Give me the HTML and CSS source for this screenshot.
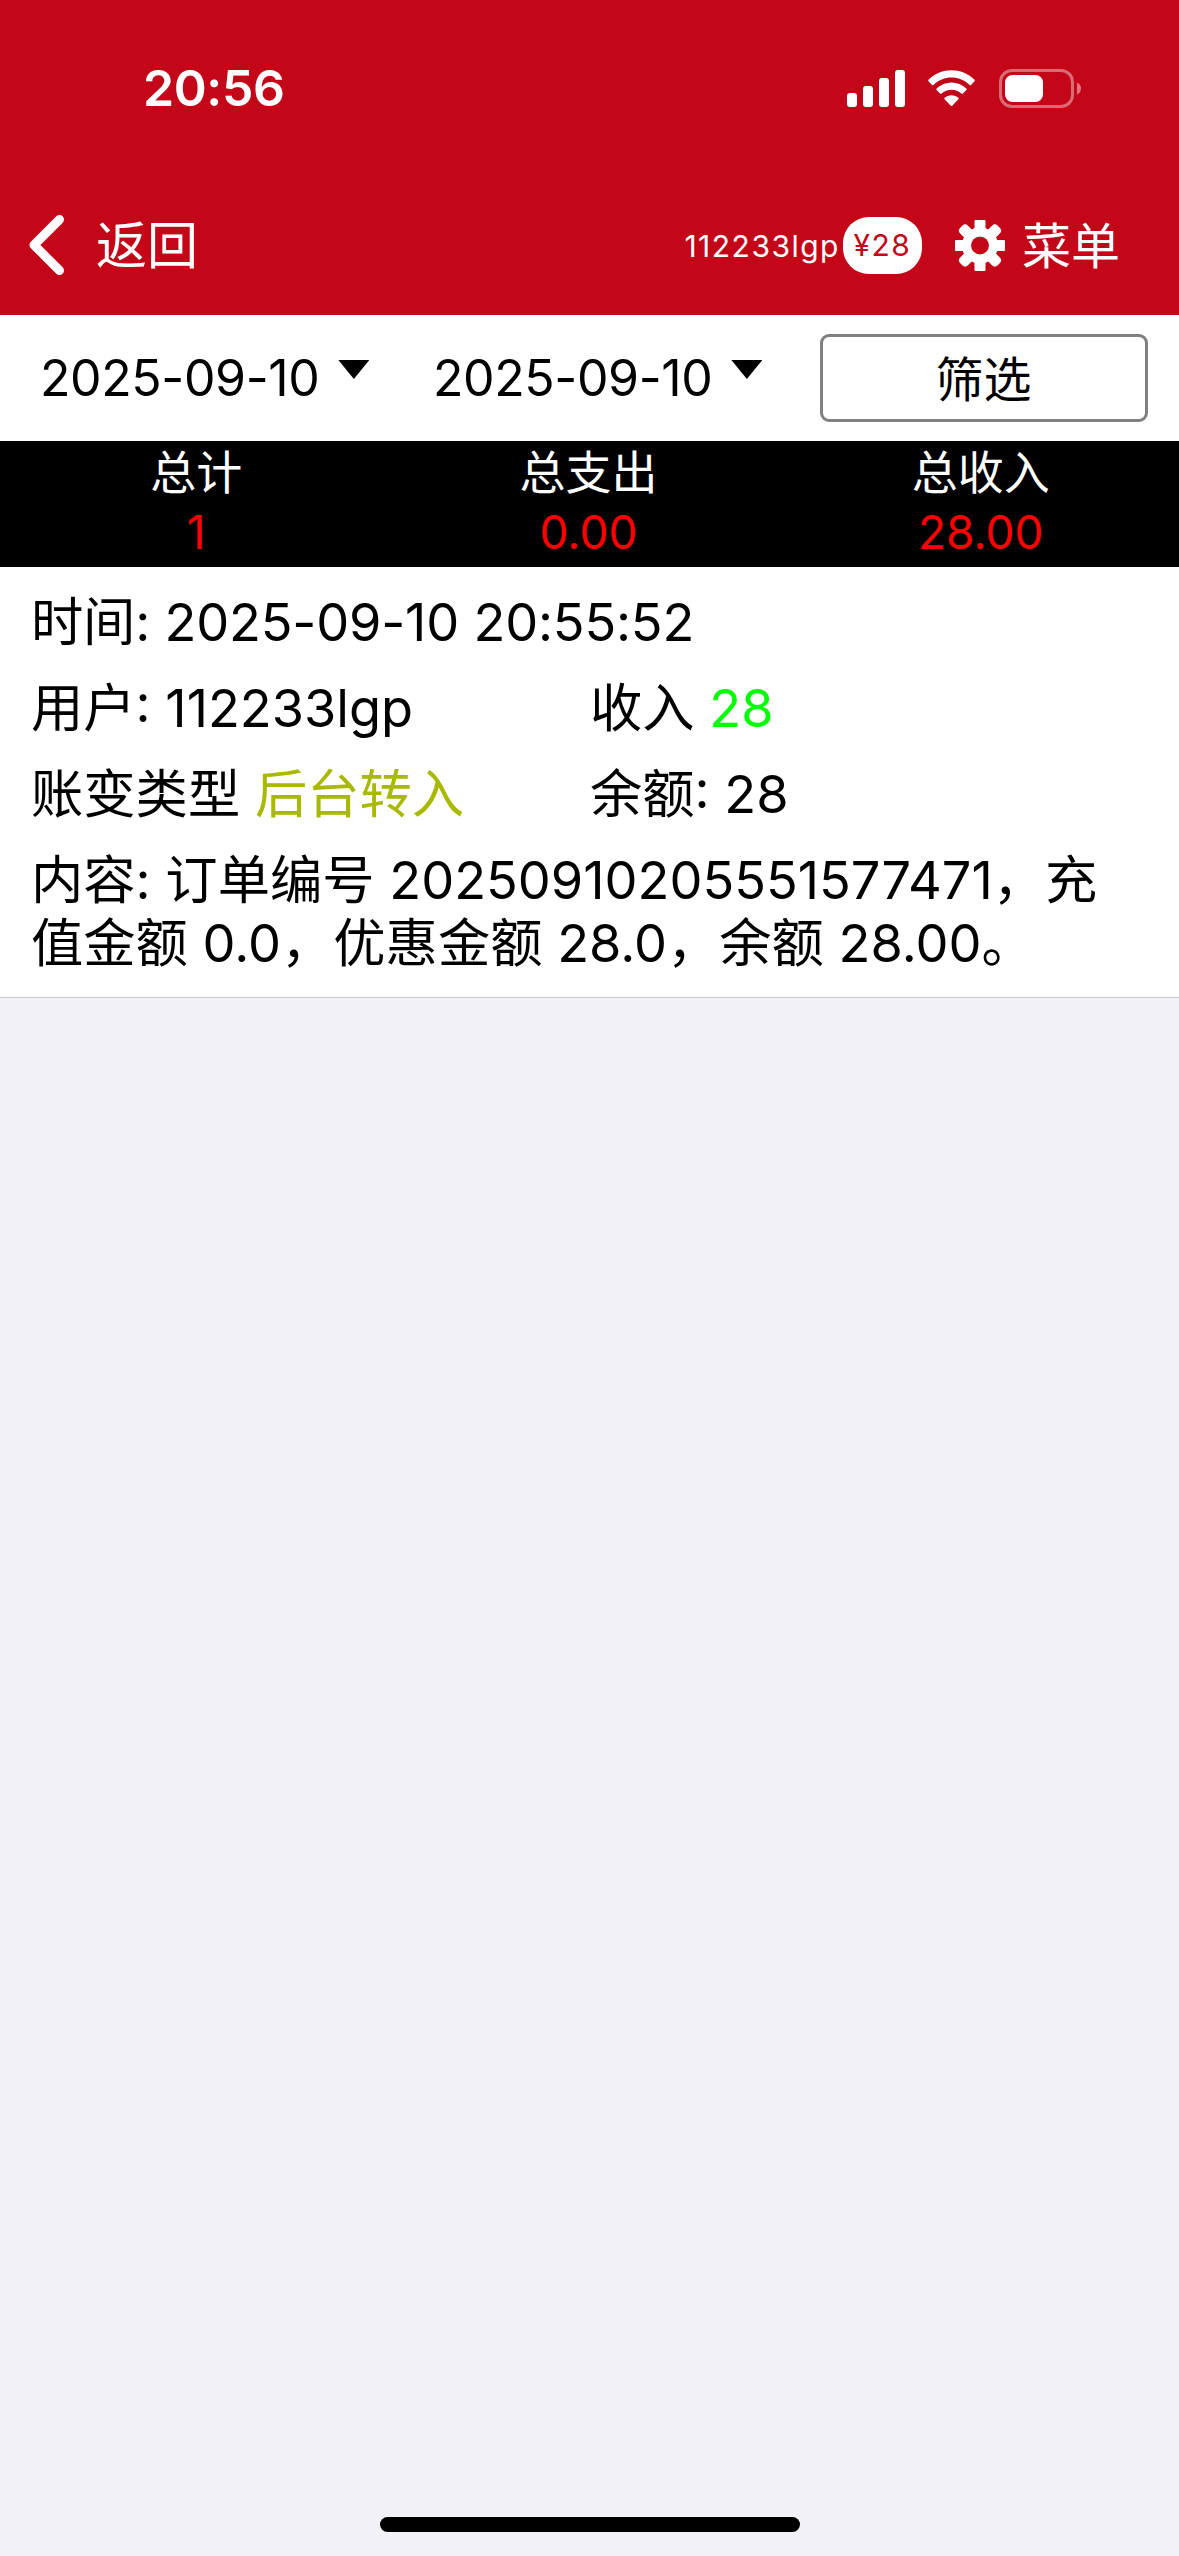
FILE: index.html
```html
<!DOCTYPE html>
<html lang="zh-CN">
<head>
    <meta charset="UTF-8">
    <meta name="viewport" content="width=device-width, initial-scale=1.0">
    <title>账变记录</title>
    <link rel="stylesheet" href="styles.css">
</head>
<body>
    <header class="header">
        <div class="status-bar">
            <span class="clock">20:56</span>
            <div class="status-icons">
                <svg class="signal" width="58" height="37" viewBox="0 0 58 37" fill="#fff">
                    <rect x="0" y="23" width="10" height="14" rx="3"/>
                    <rect x="16" y="16" width="10" height="21" rx="3"/>
                    <rect x="32" y="8" width="10" height="29" rx="3"/>
                    <rect x="48" y="0" width="10" height="37" rx="3"/>
                </svg>
                <svg class="wifi" width="51" height="37" viewBox="0 0 51 37" fill="#fff">
                    <path d="M25.5 7.6c6.8 0 13.2 2.6 18.1 7.3.4.4 1 .4 1.4 0l3.5-3.6c.4-.4.4-1.1 0-1.5C35.6-2.8 15.4-2.8 2.5 9.8c-.4.4-.4 1.1 0 1.5L6 14.9c.4.4 1 .4 1.4 0C12.3 10.2 18.7 7.6 25.5 7.6z"/>
                    <path d="M25.5 19.700c3.7 0 7.3 1.4 10 3.9.4.4 1 .4 1.4 0l3.5-3.6c.4-.4.4-1.100 0-1.500-8.400-8-21.400-8-29.800 0-.4.4-.4 1.100 0 1.500l3.5 3.600c.4.4 1 .4 1.4 0 2.800-2.500 6.300-3.900 10-3.900z"/>
                    <path d="M32.400 27.700c.4.4.4 1.100 0 1.500l-6.200 6.500c-.4.4-1 .4-1.400 0l-6.200-6.500c-.4-.4-.4-1.100 0-1.500 4-3.400 9.800-3.400 13.800 0z"/>
                </svg>
                <svg class="battery" width="82" height="39" viewBox="0 0 82 39">
                    <rect x="1.5" y="1.5" width="72" height="36" rx="11.5" fill="none" stroke="#fff" stroke-opacity=".4" stroke-width="3"/>
                    <rect x="6" y="6" width="38" height="27" rx="7.5" fill="#fff"/>
                    <path d="M78 13.5v12c2.4-1 4-3.3 4-6s-1.6-5-4-6z" fill="#fff" fill-opacity=".45"/>
                </svg>
            </div>
        </div>
        <nav class="nav-bar">
            <a class="back">
                <svg width="35" height="60" viewBox="0 0 35 60">
                    <path d="M30.5 4.5L5 30l25.5 25.5" fill="none" stroke="#fff" stroke-width="9" stroke-linecap="round" stroke-linejoin="round"/>
                </svg>
                <span>返回</span>
            </a>
            <div class="account">
                <span class="name">112233lgp</span>
                <span class="money">¥28</span>
                <svg class="gear" width="50" height="51" viewBox="0 0 50 51">
                    <g fill="#fff">
                        <rect x="19.5" y="0" width="11" height="51" rx="1"/>
                        <rect x="19.5" y="-1" width="11" height="53" rx="4" transform="rotate(45 25 25.5)"/>
                        <rect x="19.5" y="0.5" width="11" height="50" rx="1" transform="rotate(90 25 25.5)"/>
                        <rect x="19.5" y="-1" width="11" height="53" rx="4" transform="rotate(135 25 25.5)"/>
                        <circle cx="25" cy="25.5" r="18"/>
                    </g>
                    <circle cx="25" cy="25.5" r="9" fill="#c40718"/>
                </svg>
                <span class="menu">菜单</span>
            </div>
        </nav>
    </header>

    <div class="filter">
        <div class="date">2025-09-10<i class="arrow"></i></div>
        <div class="date">2025-09-10<i class="arrow"></i></div>
        <button class="filter-btn">筛选</button>
    </div>

    <div class="total">
        <div><p>总计</p><p class="num">1</p></div>
        <div><p>总支出</p><p class="num">0.00</p></div>
        <div><p>总收入</p><p class="num">28.00</p></div>
    </div>

    <div class="record">
        <div class="row time">时间: 2025-09-10 20:55:52</div>
        <div class="row cols">
            <span>用户: 112233lgp</span>
            <span>收入 <em class="income">28</em></span>
        </div>
        <div class="row cols">
            <span>账变类型 <em class="type">后台转入</em></span>
            <span>余额: 28</span>
        </div>
        <div class="row">内容: 订单编号 20250910205551577471，充值金额 0.0，优惠金额 28.0，余额 28.00。</div>
    </div>

    <div class="home-bar"></div>
</body>
</html>
```
FILE: styles.css
```css
* {
    box-sizing: border-box;
}
body {
    margin: 0;
    height: 2556px;
    display: flex;
    flex-direction: column;
    background: #f2f1f6;
    color: #000;
    font-family: Inter, "Noto Sans CJK SC", sans-serif;
    font-size: 52.3px;
}
p {
    margin: 0;
}
em, i {
    font-style: normal;
}
svg {
    display: block;
}

.header {
    height: 315px;
    background: #c40718;
    color: #fff;
}
.status-bar {
    height: 176px;
    padding: 0 98px 0 143px;
    display: flex;
    align-items: center;
    justify-content: space-between;
}
.clock {
    font-size: 50px;
    font-weight: 600;
    letter-spacing: -0.4px;
}
.status-icons {
    display: flex;
    align-items: center;
}
.wifi {
    margin: 0 22px 0 21px;
}
.nav-bar {
    height: 139px;
    padding: 0 59px 0 29px;
    display: flex;
    align-items: center;
    justify-content: space-between;
    font-size: 50px;
}
.back, .account {
    display: flex;
    align-items: center;
}
.back span, .menu {
    padding-bottom: 7px;
}
.back svg {
    margin-bottom: 2px;
}
.back span {
    margin-left: 32px;
    font-size: 51px;
}
.name {
    font-size: 30px;
    letter-spacing: 1.5px;
    margin-right: 3px;
}
.money {
    width: 79px;
    height: 57px;
    line-height: 57px;
    border-radius: 26px;
    background: #fff;
    color: #c40718;
    font-size: 30px;
    letter-spacing: 1.5px;
    text-align: center;
}
.gear {
    margin: 0 17px 0 33px;
}
.menu {
    font-size: 49px;
}

.filter {
    height: 126px;
    padding: 0 31px 0 40px;
    display: flex;
    align-items: center;
    background: #fff;
}
.date {
    width: 393px;
    display: flex;
    align-items: center;
    font-size: 50px;
    letter-spacing: -0.4px;
}
.arrow {
    width: 31px;
    height: 19px;
    margin: 0 0 17px 19px;
    background: #000;
    clip-path: polygon(0 0, 100% 0, 50% 100%);
}
.filter-btn {
    flex: 1;
    height: 88px;
    margin-left: -6px;
    padding: 0 1px 5px 0;
    border: 3px solid #808080;
    border-radius: 9px;
    background: #fff;
    color: #000;
    font-family: inherit;
    font-size: 48px;
}

.total {
    height: 126px;
    padding: 1px 2px 0 0;
    display: grid;
    grid-template-columns: repeat(3, 1fr);
    background: #000;
    color: #fff;
    font-size: 46px;
    line-height: 60px;
    text-align: center;
}
.total .num {
    color: #f00;
}

.record {
    padding: 12px 60px 11px 31px;
    background: #fff;
    border-bottom: 1px solid #c8c7cc;
    line-height: 63px;
}
.row {
    padding: 11.5px 0;
}
.time {
    letter-spacing: -0.2px;
}
.cols {
    display: grid;
    grid-template-columns: 559px 1fr;
}
.income {
    color: #0f0;
}
.type {
    color: #a8b900;
}

.home-bar {
    width: 420px;
    height: 15px;
    margin: auto auto 24px;
    border-radius: 8px;
    background: #000;
}
```
